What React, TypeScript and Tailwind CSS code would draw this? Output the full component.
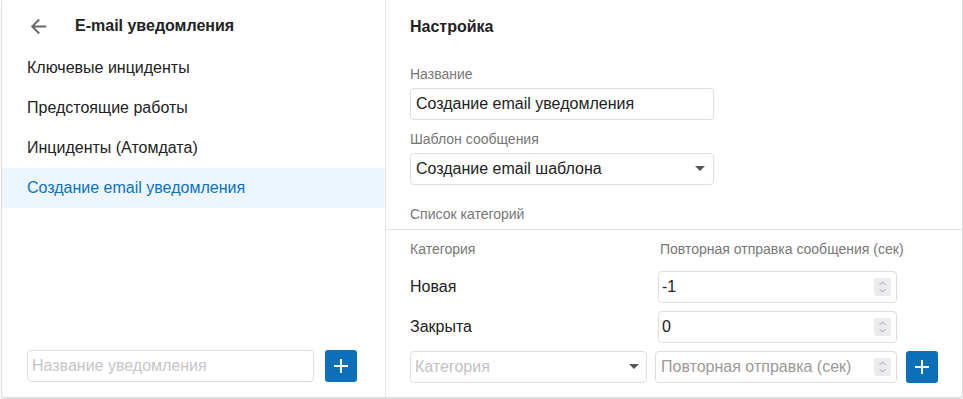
import { useState } from 'react';

const font = { fontFamily: '"Liberation Sans", Arial, sans-serif' };

function Spinner() {
    return (
        <div className="w-[17px] h-[18px] bg-[#ececef] rounded-[2px] flex flex-col items-center justify-center">
            <svg width="9" height="14" viewBox="0 0 9 14" fill="none" stroke="#a3a3a8" strokeWidth="1">
                <path d="M1.5 5 L4.5 2 L7.5 5" />
                <path d="M1.5 9 L4.5 12 L7.5 9" />
            </svg>
        </div>
    );
}

function Caret() {
    return (
        <svg width="10" height="6" viewBox="0 0 10 6">
            <path d="M0 0 L10 0 L5 5 Z" fill="#555" />
        </svg>
    );
}

function PlusButton() {
    return (
        <button className="w-8 h-8 rounded-[3px] bg-[#0b6fba] flex items-center justify-center shrink-0">
            <svg width="16" height="16" viewBox="0 0 16 16" stroke="#fff" strokeWidth="2">
                <path d="M8 1 V15 M1 8 H15" />
            </svg>
        </button>
    );
}

export default function App() {
    const [selected, setSelected] = useState(3);
    const items = ['Ключевые инциденты', 'Предстоящие работы', 'Инциденты (Атомдата)', 'Создание email уведомления'];

    return (
        <div className="w-[963px] h-[399px] bg-white" style={font}>
            <div className="ml-px w-[962px] h-[398px] flex border-x border-b border-[#dcdcdc] rounded-b-[3px] shadow-[0_1px_1px_rgba(0,0,0,0.15)]">
                {/* left column */}
                <div className="w-[384px] border-r border-[#e6e6e6] flex flex-col">
                    <div className="h-12 flex items-center pt-1">
                        <svg className="ml-[25px]" width="23" height="23" viewBox="0 0 24 24">
                            <path fill="#666" d="M20 11H7.83l5.59-5.59L12 4l-8 8 8 8 1.41-1.41L7.83 13H20v-2z" />
                        </svg>
                        <span className="ml-[25px] text-[16px] font-bold text-[#222]">E-mail уведомления</span>
                    </div>
                    {items.map((it, i) => (
                        <div key={it} onClick={() => setSelected(i)}
                             className={i === selected
                                 ? 'h-10 pl-[25px] flex items-center text-[16px] bg-[#eef6fd] text-[#0b72c2]'
                                 : 'h-10 pl-[25px] flex items-center text-[16px] text-[#222]'}>
                            {it}
                        </div>
                    ))}
                    <div className="mt-auto flex items-center gap-[11px] pl-[25px] pb-[15px]">
                        <input placeholder="Название уведомления"
                               className="w-[287px] h-8 px-1 border border-[#dedede] rounded-[4px] text-[16px] text-[#222] placeholder:text-[#c6c6c6] outline-none" />
                        <PlusButton />
                    </div>
                </div>

                {/* right column */}
                <div className="flex-1 flex flex-col">
                    <div className="px-6 border-b border-[#e3e3e3]">
                        <div className="h-[54px] flex items-center text-[16px] font-bold text-[#222]">Настройка</div>
                        <div className="h-[34px] flex items-end pb-[6px] text-[14px] leading-4 text-[#777]">Название</div>
                        <input defaultValue="Создание email уведомления"
                               className="w-[304px] h-8 px-[5px] border border-[#dedede] rounded-[4px] text-[16px] text-[#222] outline-none" />
                        <div className="h-[33px] flex items-end pb-[6px] text-[14px] leading-4 text-[#777]">Шаблон сообщения</div>
                        <div className="w-[304px] h-8 px-[5px] border border-[#dedede] rounded-[4px] flex items-center justify-between text-[16px] text-[#222]">
                            <span>Создание email шаблона</span>
                            <span className="mr-[3px]"><Caret /></span>
                        </div>
                        <div className="h-[44px] flex items-end pb-[7px] text-[14px] leading-4 text-[#777]">Список категорий</div>
                    </div>
                    <div className="px-6">
                        <div className="h-[41px] flex pt-[11px] text-[14px] leading-4 text-[#777]">
                            <span className="w-[250px]">Категория</span>
                            <span>Повторная отправка сообщения (сек)</span>
                        </div>
                        <div className="flex flex-col gap-2">
                            {[['Новая', '-1'], ['Закрыта', '0']].map(([name, val]) => (
                                <div key={name} className="h-8 flex items-center">
                                    <span className="w-[248px] text-[16px] text-[#222]">{name}</span>
                                    <div className="w-[239px] h-8 pl-[3px] pr-[5px] border border-[#dedede] rounded-[4px] flex items-center justify-between text-[16px] text-[#222]">
                                        <span>{val}</span>
                                        <Spinner />
                                    </div>
                                </div>
                            ))}
                            <div className="h-8 flex items-center">
                                <div className="w-[237px] h-8 px-1 border border-[#dedede] rounded-[4px] flex items-center justify-between text-[16px] text-[#c2c2c2]">
                                    <span>Категория</span>
                                    <span className="mr-[3px]"><Caret /></span>
                                </div>
                                <div className="ml-2 w-[242px] h-8 pl-[5px] pr-[5px] border border-[#dedede] rounded-[4px] flex items-center justify-between text-[16px] text-[#9a9a9a]">
                                    <span>Повторная отправка (сек)</span>
                                    <Spinner />
                                </div>
                                <div className="ml-[9px]"><PlusButton /></div>
                            </div>
                        </div>
                    </div>
                </div>
            </div>
        </div>
    );
}
